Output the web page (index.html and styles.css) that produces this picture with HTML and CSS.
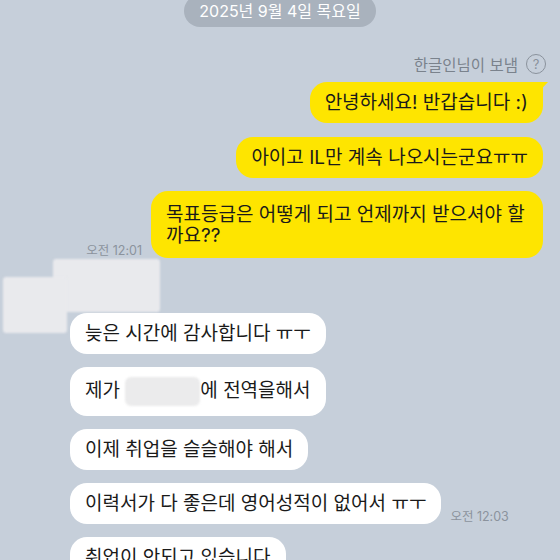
FILE: index.html
```html
<!DOCTYPE html>
<html lang="ko">
<head>
<meta charset="utf-8">
<title>채팅</title>
<link rel="stylesheet" href="styles.css">
</head>
<body>
<div class="chat">
  <div class="date-row"><span class="date">2025년 9월 4일 목요일</span></div>

  <div class="sent">
    <div class="sender">한글인님이 보냄<span class="help">?</span></div>
    <div class="row out"><div class="bubble yellow first">안녕하세요! 반갑습니다 :)</div></div>
    <div class="row out"><div class="bubble yellow">아이고 IL만 계속 나오시는군요ㅠㅠ</div></div>
    <div class="row out"><span class="time">오전 12:01</span><div class="bubble yellow tall">목표등급은 어떻게 되고 언제까지 받으셔야 할 까요??</div></div>
  </div>

  <div class="received">
    <div class="mask mask-name"></div>
    <div class="mask mask-avatar"></div>
    <div class="name-space"></div>
    <div class="row in"><div class="bubble white">늦은 시간에 감사합니다 ㅠㅜ</div></div>
    <div class="row in"><div class="bubble white">제가 <span class="redact"></span>에 전역을해서</div></div>
    <div class="row in"><div class="bubble white">이제 취업을 슬슬해야 해서</div></div>
    <div class="row in"><div class="bubble white">이력서가 다 좋은데 영어성적이 없어서 ㅠㅜ</div><span class="time">오전 12:03</span></div>
    <div class="row in"><div class="bubble white">취업이 안되고 있습니다</div></div>
  </div>
</div>
</body>
</html>
```

FILE: styles.css
```css
* { box-sizing: border-box; }

html, body {
  margin: 0;
  padding: 0;
}

body {
  width: 560px;
  height: 560px;
  overflow: hidden;
  background: #c6cfda;
  font-family: "Inter", "Noto Sans CJK KR", sans-serif;
  color: #1a1a1a;
}

.chat {
  display: flex;
  flex-direction: column;
  padding: 0 17px 0 0;
}

.date-row {
  display: flex;
  justify-content: center;
  margin-top: -5px;
  padding-left: 17px;
}

.date {
  height: 32px;
  line-height: 32px;
  padding: 0 15px;
  border-radius: 16px;
  background: #a9b2bd;
  color: #ffffff;
  font-size: 16px;
  white-space: nowrap;
}

.sent {
  display: flex;
  flex-direction: column;
  gap: 13.5px;
  margin-top: 27px;
}

.sender {
  display: flex;
  justify-content: flex-end;
  align-items: center;
  gap: 8px;
  height: 20px;
  margin-bottom: -5.5px;
  margin-right: -3px;
  font-size: 15.5px;
  color: #7a828c;
}

.help {
  display: inline-flex;
  align-items: center;
  justify-content: center;
  width: 20px;
  height: 20px;
  border: 1.3px solid #8a929c;
  border-radius: 50%;
  font-size: 13px;
  line-height: 1;
  color: #8a929c;
}

.row {
  display: flex;
  align-items: flex-end;
  gap: 9px;
}

.row.out { justify-content: flex-end; }
.row.in { justify-content: flex-start; }

.bubble {
  position: relative;
  padding: 10px 15px;
  border-radius: 17px;
  font-size: 19px;
  line-height: 21px;
  max-width: 392px;
  word-break: keep-all;
  overflow-wrap: break-word;
}

.bubble.tall {
  padding-top: 12.5px;
  padding-bottom: 12.5px;
}

.yellow { background: #fee500; }
.white { background: #ffffff; }

.yellow.first { border-top-right-radius: 6px; }

.yellow.first::after {
  content: "";
  position: absolute;
  top: 0;
  right: -5px;
  width: 14px;
  height: 12px;
  background: #fee500;
  clip-path: polygon(0 0, 100% 0, 20% 100%);
}

.time {
  font-size: 12.5px;
  line-height: 14px;
  color: #8b939d;
  white-space: nowrap;
}

.received {
  position: relative;
  display: flex;
  flex-direction: column;
  gap: 13px;
  padding-left: 70px;
}

.name-space {
  height: 55px;
  margin-bottom: -13px;
}

.mask {
  position: absolute;
  background: #e9eaed;
  filter: blur(1.2px);
}

.mask-name {
  left: 53px;
  top: 1px;
  width: 107px;
  height: 53px;
  border-radius: 3px;
}

.mask-avatar {
  left: 3px;
  top: 19px;
  width: 64px;
  height: 56px;
  border-radius: 3px;
}

.redact {
  display: inline-block;
  width: 75px;
  height: 29px;
  vertical-align: middle;
  border-radius: 6px;
  background: #ebebec;
  filter: blur(0.8px);
}
```
